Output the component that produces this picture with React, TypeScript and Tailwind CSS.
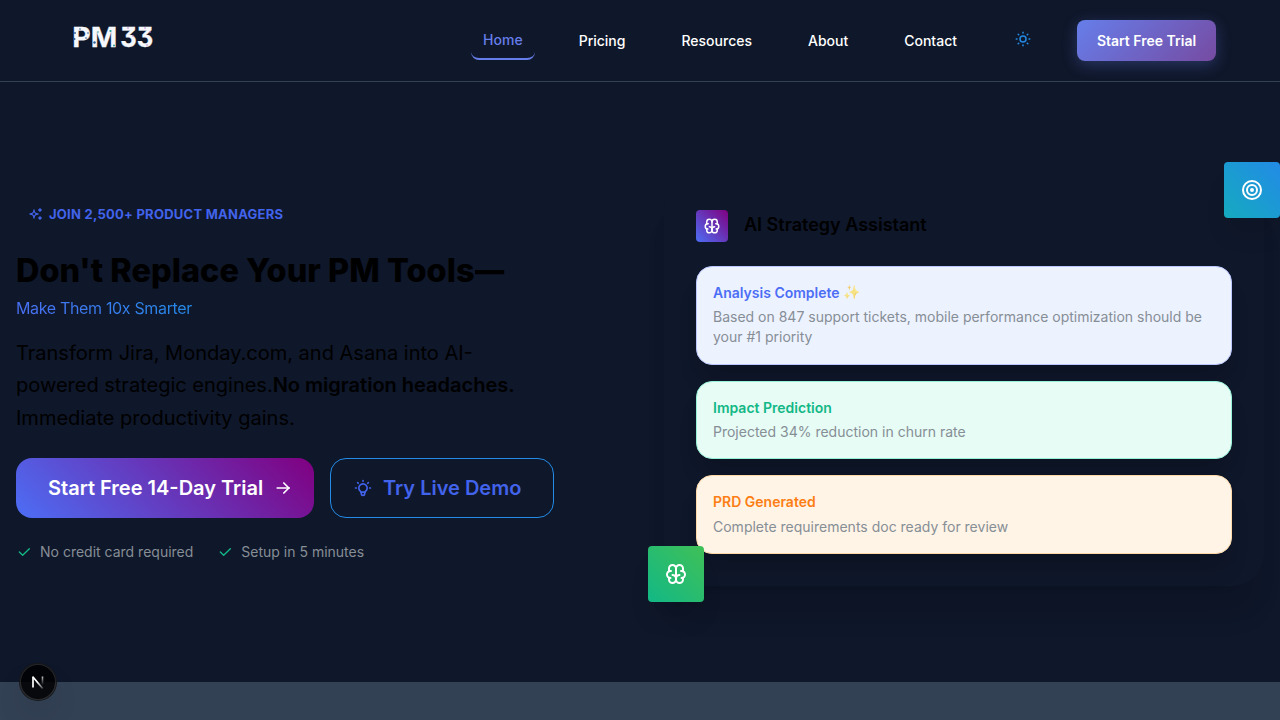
import type { ReactNode } from "react";
import { TbArrowRight, TbBrain, TbBulb, TbCheck, TbSparkles, TbSun, TbTarget } from "react-icons/tb";

function Logo() {
  return (
    <svg width="96" height="40" viewBox="0 0 96 40" className="block overflow-visible">
      <g
        fill="#f5f7fb"
        stroke="#f5f7fb"
        strokeWidth="0.3"
        style={{ fontFamily: "Inter, sans-serif", fontWeight: 700, fontSize: 27.5, fontFeatureSettings: '"cv09"' }}
      >
        <text x="8.200" y="30" textLength="45" lengthAdjust="spacingAndGlyphs">PM</text>
        <text x="56.300" y="30" textLength="33" lengthAdjust="spacingAndGlyphs">33</text>
      </g>
      <g fill="#2d5c94">
        <circle cx="11" cy="16" r=".9" />
        <circle cx="10.500" cy="22" r="1" />
        <circle cx="16" cy="12" r=".8" />
        <circle cx="22" cy="21" r=".8" />
        <circle cx="30.500" cy="25.500" r="1.2" />
        <circle cx="24" cy="16" r=".8" />
      </g>
      <g fill="#2a9c9a">
        <circle cx="46.500" cy="14" r="1.1" />
        <circle cx="50" cy="28.500" r="1" />
        <circle cx="34" cy="15" r=".8" />
      </g>
      <g fill="#b67fcb">
        <circle cx="64" cy="11" r=".8" />
        <circle cx="69" cy="19" r=".8" />
        <circle cx="81" cy="11" r=".8" />
        <circle cx="86" cy="15" r=".8" />
        <circle cx="83" cy="28" r=".8" />
      </g>
    </svg>
  );
}

function NavLink({ children }: { children: ReactNode }) {
  return <a className="px-3 pt-[1px] text-sm leading-5 font-medium text-white">{children}</a>;
}

function Header() {
  return (
    <header className="flex h-[82px] shrink-0 items-center border-b border-[#334155] pr-16 pl-16">
      <div className="-mt-[7px]">
        <Logo />
      </div>
      <nav className="ml-auto flex items-center gap-8">
        <a className="flex h-[38px] items-center rounded-lg border-b-2 border-[#667eea] px-3 text-sm font-medium text-[#667eea]">
          Home
        </a>
        <NavLink>Pricing</NavLink>
        <NavLink>Resources</NavLink>
        <NavLink>About</NavLink>
        <NavLink>Contact</NavLink>
      </nav>
      <div className="mr-[45px] ml-[45px] -mt-[3px] text-[#228be6]">
        <TbSun size={18} />
      </div>
      <button className="h-[41px] w-[139px] rounded-lg bg-linear-[135deg,#667eea,#764ba2] text-sm font-semibold text-white shadow-[0_4px_15px_rgba(102,126,234,0.3)]">
        Start Free Trial
      </button>
    </header>
  );
}

function Perk({ children }: { children: ReactNode }) {
  return (
    <div className="flex items-center gap-2 text-sm text-[#868e96]">
      <TbCheck size={16} className="text-[#12b886]" />
      <span>{children}</span>
    </div>
  );
}

function HeroCopy() {
  return (
    <div className="flex w-[600px] flex-col pt-[20px]">
      <div className="flex h-8 items-center gap-[5px] pl-3 text-[13px] font-bold tracking-[0.25px] text-[#4263eb]">
        <TbSparkles size={16} />
        <span className="pt-[2px]">JOIN 2,500+ PRODUCT MANAGERS</span>
      </div>
      <h1 className="mt-[19px] h-[43px] text-[32.4px] leading-[44px] font-extrabold tracking-[0.06px] whitespace-nowrap text-black">
        Don&apos;t Replace Your PM Tools<span className="inline-block origin-left scale-x-[0.9]">—</span>
      </h1>
      <p className="mt-1 self-start bg-linear-[45deg,#4c6ef5,#228be6] bg-clip-text text-base leading-[25px] tracking-[-0.34px] text-transparent">
        Make Them 10x Smarter
      </p>
      <p className="mt-[15.5px] w-[510px] text-xl leading-[32.5px] text-black">
        Transform Jira, Monday.com, and Asana into AI-
        <br />
        powered strategic engines.<strong className="font-semibold">No migration headaches.</strong>
        <br />
        Immediate productivity gains.
      </p>
      <div className="mt-6 flex gap-4">
        <button className="flex h-[60px] w-[298px] items-center gap-[10px] rounded-2xl bg-linear-[45deg,#4c6ef5,#800080] pl-8 text-xl font-semibold text-white">
          Start Free 14-Day Trial
          <TbArrowRight size={20} />
        </button>
        <button className="flex h-[60px] w-56 items-center gap-[10px] rounded-2xl border border-[#228be6] pl-[22px] text-xl font-semibold text-[#4263eb]">
          <TbBulb size={20} />
          Try Live Demo
        </button>
      </div>
      <div className="mt-6 flex gap-6">
        <Perk>No credit card required</Perk>
        <Perk>Setup in 5 minutes</Perk>
      </div>
    </div>
  );
}

function Insight({ title, tone, children }: { title: ReactNode; tone: string; children: ReactNode }) {
  return (
    <div className={`rounded-2xl border px-4 pt-[15px] shadow-[0_10px_15px_-5px_rgba(0,0,0,0.1),0_20px_25px_-5px_rgba(0,0,0,0.1)] ${tone}`}>
      <div className="h-[25px] text-sm leading-[21px] font-semibold">{title}</div>
      <p className="text-sm leading-[20px] text-[#868e96]">{children}</p>
    </div>
  );
}

function AssistantCard() {
  return (
    <section className="relative h-[408px] w-[600px] rounded-[32px] bg-[#0f172a] p-8 shadow-[0_28px_23px_-7px_rgba(0,0,0,0.06),0_36px_28px_-7px_rgba(0,0,0,0.08)]">
      <div className="mb-6 flex h-8 items-center gap-4">
        <div className="flex size-8 items-center justify-center rounded bg-linear-[45deg,#4c6ef5,#800080] text-white">
          <TbBrain size={18} />
        </div>
        <h2 className="-mt-[2px] text-lg font-semibold text-black">AI Strategy Assistant</h2>
      </div>
      <div className="flex flex-col gap-4">
        <Insight
          title={<>Analysis Complete <span className="relative -top-px opacity-60">✨</span></>}
          tone="h-[99px] bg-[#edf2ff] border-[#bac8ff] text-[#4c6ef5]"
        >
          Based on 847 support tickets, mobile performance optimization should be your #1 priority
        </Insight>
        <Insight title="Impact Prediction" tone="h-[78px] bg-[#e6fcf5] border-[#96f2d7] text-[#12b886]">
          Projected 34% reduction in churn rate
        </Insight>
        <Insight title="PRD Generated" tone="h-[79px] bg-[#fff4e6] border-[#ffd8a8] text-[#fd7e14]">
          <span className="block pt-px">Complete requirements doc ready for review</span>
        </Insight>
      </div>
      <div className="absolute -top-4 -right-4 flex size-14 items-center justify-center rounded bg-linear-[45deg,#15aabf,#228be6] text-white shadow-[0_20px_25px_-5px_rgba(0,0,0,0.1)]">
        <TbTarget size={24} />
      </div>
      <div className="absolute -bottom-4 -left-4 flex size-14 items-center justify-center rounded bg-linear-[45deg,#12b886,#40c057] text-white shadow-[0_20px_25px_-5px_rgba(0,0,0,0.1)]">
        <TbBrain size={24} />
      </div>
    </section>
  );
}

function DevBadge() {
  return (
    <div className="absolute top-[664px] left-5 flex size-9 items-center justify-center rounded-full bg-black/85 shadow-[0_0_0_1px_#171717,inset_0_0_0_1px_rgba(255,255,255,0.14),0_16px_32px_-8px_rgba(0,0,0,0.24)]">
      <svg width="14" height="16" viewBox="0 0 14 16" fill="none">
        <defs>
          <linearGradient id="diagonal" x1="7" y1="8" x2="13" y2="15" gradientUnits="userSpaceOnUse">
            <stop stopColor="#fff" />
            <stop offset="1" stopColor="#fff" stopOpacity="0.1" />
          </linearGradient>
          <linearGradient id="stem" x1="0" y1="2" x2="0" y2="11" gradientUnits="userSpaceOnUse">
            <stop stopColor="#fff" stopOpacity="0.8" />
            <stop offset="1" stopColor="#fff" stopOpacity="0" />
          </linearGradient>
        </defs>
        <path d="M2 3L11.700 14.500" stroke="url(#diagonal)" strokeWidth="1.700" />
        <path d="M2 13.500V2.500" stroke="#fff" strokeWidth="1.700" />
        <path d="M11.500 2.500V11" stroke="url(#stem)" strokeWidth="1.600" />
      </svg>
    </div>
  );
}

export default function App() {
  return (
    <div className="relative flex h-[720px] w-[1280px] flex-col overflow-hidden bg-[#0f172a] font-['Inter',sans-serif]">
      <Header />
      <main className="flex h-[600px] shrink-0 gap-12 px-4 pt-24">
        <HeroCopy />
        <AssistantCard />
      </main>
      <div className="relative grow bg-[#334155]" />
      <DevBadge />
    </div>
  );
}
